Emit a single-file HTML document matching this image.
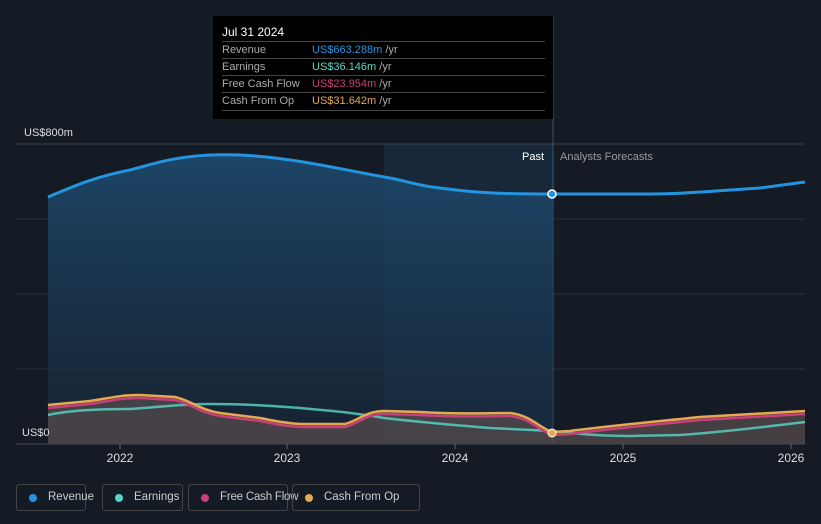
<!DOCTYPE html>
<html><head><style>
body{margin:0;background:#151b25;font-family:"Liberation Sans",sans-serif;}
.w{position:relative;width:821px;height:524px;overflow:hidden}
.tt{position:absolute;left:213px;top:16px;width:340px;height:103px;background:#000;color:#fff;font-size:11px}
.tt .h{position:absolute;left:9px;top:9px;font-size:12px}
.row{position:absolute;left:9px;width:323px;height:17px;border-top:1px solid #444;line-height:17px;color:#aaa}
.row span{position:absolute;left:90px}
.leg{position:absolute;top:484px;height:27px;border:1px solid #444;border-radius:3px;color:#ccc;font-size:11.5px;line-height:25px;box-sizing:border-box;padding-left:31px;white-space:nowrap}
.leg i{position:absolute;left:12px;top:9px;width:8px;height:8px;border-radius:50%}
</style></head><body><div class="w">
<svg width="821" height="524" style="position:absolute;left:0;top:0">
<defs><linearGradient id="g" x1="0" y1="0" x2="0" y2="1"><stop offset="0" stop-color="#1d4a6e" stop-opacity=".9"/><stop offset="1" stop-color="#17283a" stop-opacity=".6"/></linearGradient>
<clipPath id="c"><rect x="0" y="0" width="553" height="524"/></clipPath></defs>
<rect x="384" y="144" width="169" height="300" fill="#182838"/>
<line x1="16" y1="144" x2="805" y2="144" stroke="#3a414c"/>
<line x1="16" y1="219" x2="805" y2="219" stroke="#2a313c"/>
<line x1="16" y1="294" x2="805" y2="294" stroke="#2a313c"/>
<line x1="16" y1="369" x2="805" y2="369" stroke="#2a313c"/>
<line x1="553" y1="16" x2="553" y2="444" stroke="#2a5a80"/>
<path clip-path="url(#c)" d="M48,197 C70,188 90,178 130,170 C150,165 170,157 210,155 C240,154 265,156 290,160 C320,164 350,171 390,178 C410,182 420,186 440,188 C470,192 490,194 552,194 L650,194 C680,194 700,192 760,188 L805,182 L805,444 L48,444Z" fill="url(#g)"/>
<path d="M48,197 C70,188 90,178 130,170 C150,165 170,157 210,155 C240,154 265,156 290,160 C320,164 350,171 390,178 C410,182 420,186 440,188 C470,192 490,194 552,194 L650,194 C680,194 700,192 760,188 L805,182" fill="none" stroke="#2394df" stroke-width="3"/>
<path d="M48,405 L90,401 C110,398 120,395 140,395 L175,397 C190,400 200,410 220,413 L260,418 C275,421 285,423 300,424 L345,424 C360,420 365,411 385,411 L420,412 C440,413 460,414 510,413 C530,415 540,428 552,432 L570,431 C600,427 630,424 700,417 L805,411 L805,444 L48,444Z" fill="#5a4e4e" fill-opacity=".7"/>
<path d="M48,415 C70,410 100,409 130,409 C160,407 180,404 210,404 C240,404 260,405 300,408 C330,411 350,412 384,418 C410,421 440,424 490,428 L552,431 C580,434 600,436 630,436 L680,435 C710,433 740,430 805,422" fill="none" stroke="#5ad6c8" stroke-width="2.5" opacity=".8"/>
<path d="M48,408 L90,404 C110,401 120,398 140,398 L175,400 C190,403 200,413 220,416 L260,421 C275,424 285,426 300,427 L345,427 C360,423 365,414 385,414 L420,415 C440,416 460,417 510,416 C530,418 540,431 552,435 L570,434 C600,430 630,427 700,420 L805,414" fill="none" stroke="#c8407a" stroke-width="2.5"/>
<path d="M48,405 L90,401 C110,398 120,395 140,395 L175,397 C190,400 200,410 220,413 L260,418 C275,421 285,423 300,424 L345,424 C360,420 365,411 385,411 L420,412 C440,413 460,414 510,413 C530,415 540,428 552,432 L570,431 C600,427 630,424 700,417 L805,411" fill="none" stroke="#e8a850" stroke-width="2.5"/>
<circle cx="552" cy="194" r="4" fill="#2394df" stroke="#fff" stroke-width="1.5"/>
<circle cx="552" cy="433" r="4" fill="#e8a850" stroke="#fff" stroke-width="1"/>
<line x1="16" y1="444" x2="805" y2="444" stroke="#444b55"/>
<g stroke="#666"><line x1="120" y1="444" x2="120" y2="449"/><line x1="287" y1="444" x2="287" y2="449"/><line x1="455" y1="444" x2="455" y2="449"/><line x1="623" y1="444" x2="623" y2="449"/><line x1="791" y1="444" x2="791" y2="449"/></g>
<g fill="#ddd" font-size="12" text-anchor="middle"><text x="120" y="462">2022</text><text x="287" y="462">2023</text><text x="455" y="462">2024</text><text x="623" y="462">2025</text><text x="791" y="462">2026</text></g>
<text x="24" y="136" fill="#ddd" font-size="11">US$800m</text>
<text x="22" y="436" fill="#ddd" font-size="11">US$0</text>
<text x="544" y="160" fill="#fff" font-size="11" text-anchor="end">Past</text>
<text x="560" y="160" fill="#999" font-size="11">Analysts Forecasts</text>
</svg>
<div class="tt"><div class="h">Jul 31 2024</div>
<div class="row" style="top:25px">Revenue<span><b style="font-weight:normal;color:#2394df">US$663.288m</b> /yr</span></div>
<div class="row" style="top:42px">Earnings<span><b style="font-weight:normal;color:#5ad6c8">US$36.146m</b> /yr</span></div>
<div class="row" style="top:59px">Free Cash Flow<span><b style="font-weight:normal;color:#c8407a">US$23.954m</b> /yr</span></div>
<div class="row" style="top:76px">Cash From Op<span><b style="font-weight:normal;color:#e8a850">US$31.642m</b> /yr</span></div>
<div class="row" style="top:94px;height:0"></div>
</div>
<div class="leg" style="left:16px;width:70px"><i style="background:#2394df"></i>Revenue</div>
<div class="leg" style="left:102px;width:81px"><i style="background:#5ad6c8"></i>Earnings</div>
<div class="leg" style="left:188px;width:100px;letter-spacing:-0.2px"><i style="background:#c8407a"></i>Free Cash Flow</div>
<div class="leg" style="left:292px;width:128px"><i style="background:#e8a850"></i>Cash From Op</div>
</div></body></html>
